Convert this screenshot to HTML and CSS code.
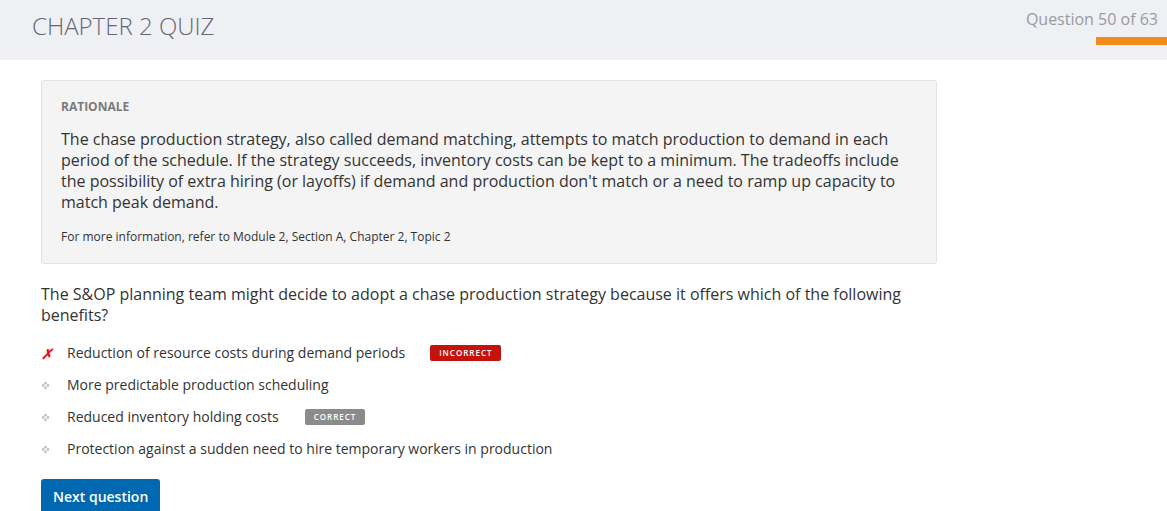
FILE: index.html
```html
<!DOCTYPE html>
<html>
<head>
<meta charset="utf-8">
<link rel="stylesheet" href="styles.css">
</head>
<body>
<header class="topbar">
  <h1 class="title">CHAPTER 2 QUIZ</h1>
  <div class="progress">
    <div class="progress-label">Question 50 of 63</div>
    <div class="progress-bar"></div>
  </div>
</header>
<main class="content">
  <section class="rationale">
    <h2 class="rationale-head">RATIONALE</h2>
    <p class="rationale-text">The chase production strategy, also called demand matching, attempts to match production to demand in each period of the schedule. If the strategy succeeds, inventory costs can be kept to a minimum. The tradeoffs include the possibility of extra hiring (or layoffs) if demand and production don't match or a need to ramp up capacity to match peak demand.</p>
    <p class="rationale-ref">For more information, refer to Module 2, Section A, Chapter 2, Topic 2</p>
  </section>
  <p class="question">The S&amp;OP planning team might decide to adopt a chase production strategy because it offers which of the following benefits?</p>
  <ul class="options">
    <li class="option"><span class="mark mark-x">✗</span><span class="opt-text">Reduction of resource costs during demand periods</span><span class="badge badge-incorrect">INCORRECT</span></li>
    <li class="option"><span class="mark"><svg width="7" height="7" viewBox="0 0 7 7"><path d="M2 0h3v2h2v3h-2v2h-3v-2h-2v-3h2z" fill="#c8c8c8"/><rect x="2" y="2" width="3" height="3" fill="#e6e6e6"/></svg></span><span class="opt-text">More predictable production scheduling</span></li>
    <li class="option"><span class="mark"><svg width="7" height="7" viewBox="0 0 7 7"><path d="M2 0h3v2h2v3h-2v2h-3v-2h-2v-3h2z" fill="#c8c8c8"/><rect x="2" y="2" width="3" height="3" fill="#e6e6e6"/></svg></span><span class="opt-text">Reduced inventory holding costs</span><span class="badge badge-correct">CORRECT</span></li>
    <li class="option"><span class="mark"><svg width="7" height="7" viewBox="0 0 7 7"><path d="M2 0h3v2h2v3h-2v2h-3v-2h-2v-3h2z" fill="#c8c8c8"/><rect x="2" y="2" width="3" height="3" fill="#e6e6e6"/></svg></span><span class="opt-text">Protection against a sudden need to hire temporary workers in production</span></li>
  </ul>
  <button class="next-btn">Next question</button>
</main>
</body>
</html>
```
FILE: styles.css
```css
* { box-sizing: border-box; }
html, body { margin: 0; padding: 0; }
body {
  font-family: "Open Sans", "Liberation Sans", sans-serif;
  color: #333;
  background: #fff;
  overflow: hidden;
}
.topbar {
  height: 60px;
  background: #eff0f4;
  display: flex;
  justify-content: space-between;
  align-items: flex-start;
}
.title {
  margin: 0;
  padding: 9px 0 0 32px;
  font-size: 24px;
  font-weight: 300;
  color: #636874;
  line-height: 34px;
}
.progress {
  display: flex;
  flex-direction: column;
  align-items: flex-end;
  padding-top: 8px;
}
.progress-label {
  font-size: 16px;
  color: #9a9a9e;
  line-height: 22px;
  padding-right: 9px;
}
.progress-bar {
  margin-top: 7px;
  width: 71px;
  height: 8px;
  background: #f28b1e;
}
.content {
  padding: 20px 0 0 41px;
  width: 937px;
}
.rationale {
  background: #f4f4f4;
  border: 1px solid #e2e2e2;
  border-radius: 3px;
  padding: 17px 19px 18px 19px;
}
.rationale-head {
  margin: 0;
  font-size: 12px;
  font-weight: 700;
  color: #7a7a7a;
  line-height: 17px;
}
.rationale-text {
  margin: 14px 0 0 0;
  font-size: 16px;
  line-height: 21px;
  color: #333;
}
.rationale-ref {
  margin: 15px 0 0 0;
  font-size: 12px;
  line-height: 17px;
  color: #333;
}
.question {
  margin: 20px 0 0 0;
  font-size: 16px;
  line-height: 21px;
  color: #333;
}
.options {
  list-style: none;
  margin: 11px 0 0 0;
  padding: 0;
}
.option {
  display: flex;
  align-items: center;
  height: 32px;
  font-size: 14px;
  color: #333;
}
.mark {
  width: 26px;
  padding-left: 1px;
  display: flex;
  align-items: center;
}
.mark-x {
  color: #ee1111;
  font-size: 14px;
  font-weight: 700;
  font-style: italic;
  padding-left: 0;
}
.opt-text { line-height: 20px; }
.badge {
  margin-left: 25px;
  font-size: 8px;
  font-weight: 600;
  letter-spacing: 1px;
  color: #fff;
  height: 16px;
  line-height: 16px;
  padding: 0 9px;
  border-radius: 2px;
}
.badge-incorrect { background: #c5130c; }
.badge-correct { background: #8b8b8b; margin-left: 26px; }
.next-btn {
  margin-top: 14px;
  background: #0067b1;
  color: #fff;
  border: none;
  border-radius: 3px;
  font-family: "Open Sans", "Liberation Sans", sans-serif;
  font-size: 14px;
  font-weight: 600;
  height: 36px;
  padding: 0 12px;
  line-height: 36px;
}
```
